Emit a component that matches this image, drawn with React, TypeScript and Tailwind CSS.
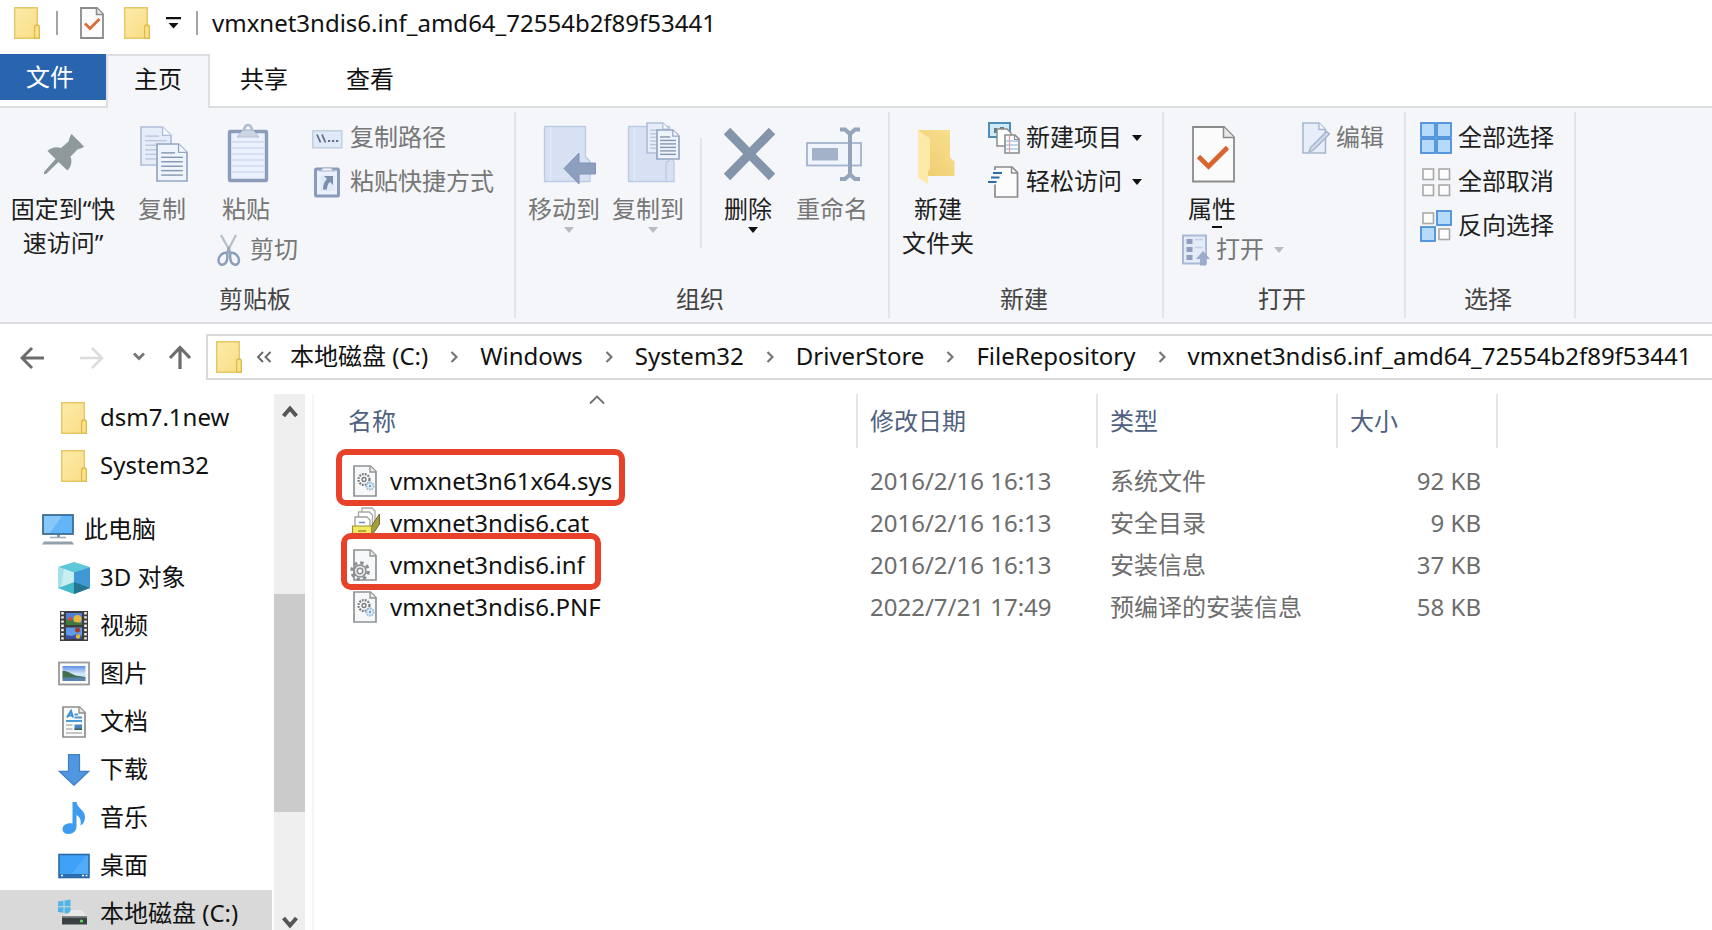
import type { ReactNode } from 'react';

const FolderIcon = () => (
  <svg className="h-8 w-[26px] shrink-0" viewBox="0 0 26 32" aria-hidden="true">
    <defs>
      <linearGradient id="folderFill" x1="0" y1="0" x2="1" y2="1">
        <stop offset="0" stopColor="#fdebab" />
        <stop offset="1" stopColor="#f8dd83" />
      </linearGradient>
    </defs>
    <path d="M.7.7h22.6v17.2l2 1.6v11.8H.7z" fill="url(#folderFill)" stroke="#e6c766" strokeWidth="1.4" />
    <path d="M20.6 31V20.2c0-1.4.8-2.2 2.4-2.2s2.3.8 2.3 2.2v11.1z" fill="#fbe28c" stroke="#dfba4c" strokeWidth="1.3" />
  </svg>
);

const CheckDocIcon = () => (
  <svg className="h-8 w-6 shrink-0" viewBox="0 0 24 32" aria-hidden="true">
    <path d="M1 1h16l6 6v24H1z" fill="#fbfbfb" stroke="#8b8b8b" strokeWidth="1.8" />
    <path d="M16.5 1v6.500H23" fill="#e8e8e8" stroke="#8b8b8b" strokeWidth="1.5" />
    <path d="M5 16.500l5 5L19.500 12" fill="none" stroke="#dd6a39" strokeWidth="2.800" />
  </svg>
);

const Big = ({ children }: { children: ReactNode }) => (
  <svg className="size-16 shrink-0" viewBox="0 0 64 64" fill="none" aria-hidden="true">
    {children}
  </svg>
);

const PinIcon = () => (
  <Big>
    <path
      d="M40.500 12L53 24.500c-2.500 2.500-5 2-6.500 3L39.500 34.500c1.800 4.500 1 10-3 14l-9-8.500L15 52h-2v-2l11.500-13-8-8c4-4 9.500-4.500 13.500-3l7.500-6.500c1-2 .5-4.500 3-7.500z"
      fill="#8f999c"
    />
  </Big>
);

const Page = ({ x, y, w, h, light }: { x: number; y: number; w: number; h: number; light?: boolean }) => {
  const f = w * 0.28;
  const stroke = light ? '#afbed9' : '#94a6c4';
  const lines = [0.24, 0.36, 0.48, 0.6, 0.72, 0.84];
  return (
    <g>
      <path d={`M${x} ${y}h${w - f}l${f} ${f}v${h - f}h${-w}z`} fill={light ? '#e6edf9' : '#eef3fc'} stroke={stroke} strokeWidth="1.7" />
      <path d={`M${x + w - f} ${y}v${f}h${f}`} fill="#f8faff" stroke={stroke} strokeWidth="1.3" />
      {lines.map((l, i) => (
        <path
          key={l}
          d={`M${x + w * 0.14} ${y + h * l}H${x + w * (i < 1 ? 0.6 : 0.86)}`}
          stroke={light ? '#b9c7df' : '#8495b2'}
          strokeWidth="1.400"
        />
      ))}
    </g>
  );
};

const CopyIcon = () => (
  <Big>
    <Page x={11} y={5} w={30} h={38} light />
    <Page x={27} y={22} w={30} h={37} />
  </Big>
);

const PasteIcon = () => (
  <Big>
    <rect x="15.500" y="9.500" width="37" height="49" rx="1" fill="#eaf1fd" stroke="#8b9cba" strokeWidth="3.400" />
    <path d="M18 20h32M18 26h32M18 32h32M18 38h32M18 44h32M18 50h32" stroke="#cfdaec" strokeWidth="1.400" />
    <path d="M23 15l6-7h10l6 7z" fill="#ccd5e2" stroke="#b3bfd0" strokeWidth="1" />
    <path d="M30 9c0-8 8-8 8 0" stroke="#b0bccd" strokeWidth="2.600" />
  </Big>
);

const MoveToIcon = () => (
  <Big>
    <path d="M12.500 4.500h41v30l4.500 5v20H12.500z" fill="#d7e1f3" stroke="#bccbe5" strokeWidth="1.300" />
    <path d="M18.500 5v54" stroke="#e3ebf8" strokeWidth="1.500" />
    <path d="M32 46.500L47 31v10h16.500v11H47v10z" fill="#8d9fbe" stroke="#8094b5" />
  </Big>
);

const CopyToIcon = () => (
  <Big>
    <path d="M12.500 4.500h41v30l4.500 5v20H12.500z" fill="#d7e1f3" stroke="#bccbe5" strokeWidth="1.300" />
    <path d="M18.500 5v54" stroke="#e3ebf8" strokeWidth="1.500" />
    <path d="M50 59V42c0-2 1.500-3 4-3" stroke="#bccbe5" strokeWidth="1.300" />
    <Page x={31} y={1} w={22} h={30} light />
    <Page x={41} y={8} w={22} h={29} />
  </Big>
);

const DeleteIcon = () => (
  <Big>
    <path d="M11 9l45 46M56 9L11 55" stroke="#8495ab" strokeWidth="9" />
  </Big>
);

const RenameIcon = () => (
  <Big>
    <rect x="7" y="21" width="54" height="22.500" fill="#eff4fd" stroke="#a3b3cd" strokeWidth="1.800" />
    <rect x="12" y="26" width="26" height="12.500" fill="#a3b2c8" />
    <path d="M50 12v40" stroke="#93a4bb" strokeWidth="4" />
    <path d="M40 7.500h5l5 4.500 5-4.500h5M40 57h5l5-4.500 5 4.500h5" stroke="#93a4bb" strokeWidth="4" />
  </Big>
);

const NewFolderIcon = () => (
  <Big>
    <defs>
      <linearGradient id="backPanel" x1="0" y1="1" x2="1" y2="0">
        <stop offset="0" stopColor="#efcb6c" />
        <stop offset="1" stopColor="#f8e091" />
      </linearGradient>
    </defs>
    <path d="M12 8h32v27.500l4.500 4V54H20z" fill="url(#backPanel)" />
    <path d="M12 8l10.500 7.500c1 1 1.500 2 1.500 3.500v29l-2 1.500V62l-10-6z" fill="#fde9a8" />
  </Big>
);

const PropertiesIcon = () => (
  <Big>
    <path d="M13 5h31l10 10v44.500H13z" fill="#fbfbfb" stroke="#8b8b8b" strokeWidth="1.800" />
    <path d="M43.500 5v10.500H54" fill="#e9e9e9" stroke="#8b8b8b" strokeWidth="1.500" />
    <path d="M18.500 34.500L28.500 44.500L47.500 25.500" stroke="#da642f" strokeWidth="4.600" />
  </Big>
);

const Small = ({ children }: { children: ReactNode }) => (
  <svg className="size-8 shrink-0" viewBox="0 0 32 32" fill="none" aria-hidden="true">
    {children}
  </svg>
);

const PathIcon = () => (
  <Small>
    <rect x=".8" y="8.800" width="29" height="17" fill="#e0e9f7" stroke="#c2cee1" strokeWidth="1.500" />
    <path d="M5 12.500l3.500 8M10 12.500l3.500 8" stroke="#5f6f87" strokeWidth="1.800" />
    <path d="M16 19h2.200M20 19h2.200M24 19h2.200" stroke="#5f6f87" strokeWidth="2" />
  </Small>
);

const PasteShortcutIcon = () => (
  <Small>
    <rect x="3.500" y="3" width="23" height="27" rx="1" fill="#eaf1fd" stroke="#8b9cba" strokeWidth="3" />
    <path d="M8 5l3-3h8l3 3z" fill="#f2f5fa" stroke="#a7b5ca" strokeWidth="1.200" />
    <rect x="8.500" y="9.500" width="14" height="15.500" fill="#e0e9f6" />
    <path d="M12 10h9v9l-3-3c-2 1.500-3 4-3 7.500h-4c0-5 1.500-8 4-10.500z" fill="#7b8eac" />
  </Small>
);

const ScissorsIcon = () => (
  <svg className="h-8 w-7 shrink-0" viewBox="0 0 28 32" fill="none" aria-hidden="true">
    <path d="M5 1l9.500 17M20 1l-9 17" stroke="#b5c0cd" strokeWidth="2.300" />
    <path
      d="M11 19c-4-1-8.500 3-8.500 7.500 0 3.500 2.500 4.500 4.500 4 3.500-1 5-5 4-11.500zM14.500 19c4-1 8.500 3 8.500 7.500 0 3.500-2.500 4.500-4.500 4-3.500-1-5-5-4-11.500z"
      stroke="#8c9fba"
      strokeWidth="2.500"
    />
    <path d="M12.700 13v7" stroke="#98a8bf" strokeWidth="3" />
  </svg>
);

const NewItemIcon = () => (
  <Small>
    <rect x="1" y="1" width="21" height="14" fill="#cfeaf8" stroke="#4e8fb8" strokeWidth="2" />
    <path d="M6 11V6h3v3h3V5h4v6z" fill="#5f7f80" />
    <path d="M9 7h10l4 4v13H9z" fill="#fff" stroke="#8c8c8c" strokeWidth="1.500" />
    <path d="M17 13h10l4 4v14H17z" fill="#fbfdff" stroke="#8c8c8c" strokeWidth="1.600" />
    <path d="M26.500 13v4.500H31" stroke="#8c8c8c" strokeWidth="1.200" />
    <path d="M18 19h12M18 23h12M18 27h12" stroke="#a9cbe8" strokeWidth="1.300" />
    <path d="M21.500 14v16" stroke="#e2a3ac" strokeWidth="1.300" />
  </Small>
);

const EasyAccessIcon = () => (
  <Small>
    <path d="M7 1h17l5.500 5.500V31H7z" fill="#fcfcfc" stroke="#8b8b8b" strokeWidth="1.700" />
    <path d="M23.500 1v6h6" stroke="#8b8b8b" strokeWidth="1.400" />
    <path d="M4 6.500h10M2 11.500h10M0 16h9" stroke="#f5f7fa" strokeWidth="5" />
    <path d="M5 7h9M3 11.500h8.500M0 16h8.500" stroke="#2f6ca5" strokeWidth="2.200" />
  </Small>
);

const OpenIcon = () => (
  <svg className="h-8 w-7 shrink-0" viewBox="0 0 28 32" fill="none" aria-hidden="true">
    <rect x="1" y="1.500" width="23" height="28" fill="#e3eaf8" stroke="#aab9d6" strokeWidth="2" />
    <path d="M4.500 5h6v5h-6zM4.500 13h6v5h-6zM4.500 21h6v5h-6z" fill="#8f9fbd" />
    <path d="M13 5.500h8M13 13.500h8" stroke="#c5d0e4" strokeWidth="1.500" />
    <path d="M21 17l7 8h-4v6.500h-6V25h-4z" fill="#9babc9" />
  </svg>
);

const EditIcon = () => (
  <svg className="h-8 w-7 shrink-0" viewBox="0 0 28 32" fill="none" aria-hidden="true">
    <path d="M1 1h16l6.500 6.500V31H1z" fill="#e7eefa" stroke="#a9b7cf" strokeWidth="1.600" />
    <path d="M17 1v6.500h6" fill="#f7faff" stroke="#a9b7cf" strokeWidth="1.400" />
    <path d="M24.500 9.500l3 2.500-16 16-4.500 2 1.500-4.500z" fill="#cdd8ea" stroke="#a3b2cb" strokeWidth="1.300" />
  </svg>
);

const BlueCell = ({ x, y }: { x: number; y: number }) => (
  <rect x={x + 1} y={y + 1} width="14" height="14" fill="#b5dafc" stroke="#4a90d9" strokeWidth="1.800" />
);
const GrayCell = ({ x, y }: { x: number; y: number }) => (
  <rect x={x + 3} y={y + 3} width="10.500" height="10.500" fill="#fdfdfd" stroke="#a9a9a9" strokeWidth="1.600" />
);

const SelectAllIcon = () => (
  <Small>
    <BlueCell x={0} y={0} />
    <BlueCell x={16} y={0} />
    <BlueCell x={0} y={16} />
    <BlueCell x={16} y={16} />
  </Small>
);
const SelectNoneIcon = () => (
  <Small>
    <GrayCell x={0} y={0} />
    <GrayCell x={16} y={0} />
    <GrayCell x={0} y={16} />
    <GrayCell x={16} y={16} />
  </Small>
);
const InvertIcon = () => (
  <Small>
    <GrayCell x={0} y={0} />
    <GrayCell x={16} y={16} />
    <BlueCell x={16} y={0} />
    <BlueCell x={0} y={16} />
  </Small>
);

const Caret = ({ dim }: { dim?: boolean }) => (
  <svg className="h-2 w-[10px] shrink-0" viewBox="0 0 10 8" aria-hidden="true">
    <path d="M0 1h10L5 7z" fill={dim ? '#b9bbbe' : '#111'} />
  </svg>
);

const Group = ({
  label,
  className,
  inset,
  children,
}: {
  label: string;
  className: string;
  inset: string;
  children: ReactNode;
}) => (
  <section aria-label={label} className={`flex shrink-0 flex-col border-r-2 border-[#e2e4e7] ${className}`}>
    <div className={`flex h-[171px] items-start pt-[10px] ${inset}`}>{children}</div>
    <div className="pr-1 text-center leading-8 text-[#444]">{label}</div>
  </section>
);

const BigButton = ({
  icon,
  label,
  className,
  disabled,
  caret,
}: {
  icon: ReactNode;
  label: ReactNode;
  className: string;
  disabled?: boolean;
  caret?: boolean;
}) => (
  <button
    type="button"
    disabled={disabled}
    className={`flex shrink-0 flex-col items-center leading-[34px] whitespace-nowrap text-[#1e1e1e] disabled:text-[#777] ${className}`}
  >
    {icon}
    <span className="mt-[6px]">{label}</span>
    {caret && (
      <span className="flex pl-[10px]">
        <Caret dim={disabled} />
      </span>
    )}
  </button>
);

const SmallButton = ({
  icon,
  label,
  disabled,
  caret,
}: {
  icon: ReactNode;
  label: string;
  disabled?: boolean;
  caret?: boolean;
}) => (
  <button
    type="button"
    disabled={disabled}
    className="flex h-8 items-center gap-[6px] leading-[30px] whitespace-nowrap text-[#1e1e1e] disabled:text-[#777]"
  >
    {icon}
    <span className="pb-[2px]">{label}</span>
    {caret && (
      <span className="flex pl-1">
        <Caret dim={disabled} />
      </span>
    )}
  </button>
);

const PcIcon = () => (
  <Small>
    <rect x="1" y="1" width="30" height="19" fill="#62b5f6" stroke="#3c6f97" strokeWidth="1.800" />
    <path d="M2 2h18L8 19H2z" fill="#86c8fa" />
    <path d="M15 21h3v2h-3z" fill="#8795a3" />
    <path d="M8 23.500h16" stroke="#a3afba" strokeWidth="1.600" />
    <path d="M2 27.500h28l2 3H0z" fill="#92a1ae" />
  </Small>
);

const CubeIcon = () => (
  <Small>
    <path d="M0 5l16-5 16 5-16 6z" fill="#5fc8d8" />
    <path d="M0 5l16 5.500V32L0 26z" fill="#a5e1ea" />
    <path d="M32 5l-16 5.500V32l16-6z" fill="#3f97d3" />
    <path d="M0 26l16-6v12z" fill="#45b9cb" />
    <path d="M16 20l16 6-16 6z" fill="#24758f" />
    <path d="M6 7l10 3.500V20L3 25z" fill="#d6f4f7" opacity=".7" />
  </Small>
);

const VideoIcon = () => (
  <Small>
    <rect x="2" y="1" width="28" height="30" fill="#3d3d3d" />
    <path d="M4.500 2v28M27.500 2v28" stroke="#f1f1f1" strokeWidth="2.600" strokeDasharray="2.400 1.800" />
    <rect x="8" y="3" width="16" height="12" fill="#4f7fd6" />
    <rect x="8" y="17.500" width="16" height="11.500" fill="#5f9be8" />
    <circle cx="19.500" cy="9" r="4" fill="#e5b934" />
    <path d="M8 10l5-2 3 4 8 1v2H8z" fill="#3d7a3c" />
    <circle cx="12" cy="9" r="2" fill="#cf4b3a" />
    <circle cx="19.500" cy="20" r="2.500" fill="#a23a2c" />
    <path d="M8 25l6 1 5-2 5 2v3H8z" fill="#3a4fa5" />
    <circle cx="20" cy="26.500" r="2.300" fill="#e5b934" />
  </Small>
);

const PictureIcon = () => (
  <Small>
    <defs>
      <linearGradient id="sky" x1="0" y1="0" x2="0" y2="1">
        <stop offset="0" stopColor="#5f8fe4" />
        <stop offset=".5" stopColor="#cfe6fa" />
        <stop offset="1" stopColor="#cfe6fa" />
      </linearGradient>
    </defs>
    <rect x="1" y="4.500" width="30" height="22" fill="#fdfdfd" stroke="#9a9a9a" strokeWidth="1.800" />
    <rect x="4.500" y="8" width="23" height="15" fill="url(#sky)" />
    <path d="M4.500 13c5-.5 8 2.500 13 4.500l10 1.500v1h-23z" fill="#42704f" />
    <path d="M4.500 19.500h23V23h-23z" fill="#5985ae" />
  </Small>
);

const DocIcon = () => (
  <Small>
    <path d="M5 1h16.500L27 6.500V31H5z" fill="#fbfbfb" stroke="#8d8d8d" strokeWidth="1.700" />
    <path d="M21 1v6h6" fill="#e8e8e8" stroke="#8d8d8d" strokeWidth="1.300" />
    <path d="M9 11.500L13 5l2 6.500M10.500 9.500H14" stroke="#3d8fd0" strokeWidth="2" />
    <path d="M16.500 8.500H20M16.500 11.500H24M8 15h16" stroke="#4b9ad8" strokeWidth="1.800" />
    <path d="M8 19h6.500M8 23h6.500M8 27h16" stroke="#b5b5b5" strokeWidth="1.500" />
    <rect x="16.500" y="18.500" width="7.500" height="5.500" fill="#4d86bd" />
    <path d="M16.500 22.500h7.500V24h-7.500z" fill="#335f4c" />
  </Small>
);

const DownloadIcon = () => (
  <Small>
    <path d="M10.500.7h11v16.600h9.300L16 31.300 1.200 17.300h9.300z" fill="#4f97e0" stroke="#3f7fc4" strokeWidth="1.200" />
  </Small>
);

const MusicIcon = () => (
  <Small>
    <path
      d="M14.500 0h4c.5 6 8.500 8 8.500 15 0 4-2 7.500-4.500 8.500 1-6-1-9-4-10.500v11.500c0 4.500-3.500 7.500-8 7.500-3.500 0-6-2-6-5 0-4 4.500-6.500 10-5.500z"
      fill="#3d9cf0"
    />
  </Small>
);

const DesktopIcon = () => (
  <Small>
    <rect x="1" y="4.500" width="30" height="23" fill="#3ea0f7" stroke="#2c6ba8" strokeWidth="1.600" />
    <path d="M28 6L14 23.500h16V6z" fill="#5bb0fa" opacity=".7" />
    <path d="M1.500 24h29v3h-29z" fill="#2a6db0" />
    <path d="M3 25.500h2M24 25.500h2M27.500 25.500h2" stroke="#fff" strokeWidth="1.500" />
  </Small>
);

const DiskIcon = () => (
  <Small>
    <path d="M0 3.500l5.500-.8v5.500H0zM6.500 2.500l6-1v6.700h-6zM0 9.300h5.500v5.400l-5.500-.8zM6.500 9.300h6V16l-6-1z" fill="#4fb5e6" />
    <path d="M14 12h10l5 6.500H4l5-2z" fill="#e9e9e9" />
    <path d="M4 18.500h25v8H4z" fill="#3d4043" />
    <path d="M4 18.500h25V20H4z" fill="#70757a" />
    <circle cx="23.500" cy="23" r="1.600" fill="#5fe35b" />
  </Small>
);

const FileShape = () => (
  <>
    <path d="M3 1h16.500L25 6.500V31H3z" fill="#f7f8f9" stroke="#8f9294" strokeWidth="1.700" />
    <path d="M19 1v6h6" fill="#e8e8e8" stroke="#8f9294" strokeWidth="1.300" />
  </>
);

const SysIcon = () => (
  <svg className="h-8 w-7 shrink-0" viewBox="0 0 28 32" fill="none" aria-hidden="true">
    <FileShape />
    <circle cx="13" cy="14.500" r="5.500" stroke="#75797c" strokeWidth="2.200" strokeDasharray="1.800 1.100" />
    <circle cx="13" cy="14.500" r="2" stroke="#75797c" strokeWidth="1.300" />
    <circle cx="19" cy="21" r="3.600" fill="#e5f1fa" stroke="#9cbcd6" strokeWidth="2" strokeDasharray="1.600 .8" />
    <circle cx="19" cy="21" r="1.200" fill="#6e9dc4" />
  </svg>
);

const CatIcon = () => (
  <svg className="h-8 w-7 shrink-0 overflow-visible" viewBox="0 0 28 32" fill="none" aria-hidden="true">
    <path d="M11 1h10l3 3v12H11z" fill="#fff" stroke="#a8a8a8" strokeWidth="1.300" />
    <path d="M7.500 5h11l3 3v12h-14z" fill="#fff" stroke="#a8a8a8" strokeWidth="1.300" />
    <path d="M4 10h12l3 3v10H4z" fill="#fff" stroke="#a0a0a0" strokeWidth="1.300" />
    <path d="M8 15.500h6" stroke="#6b8fc0" strokeWidth="1.500" />
    <path d="M20.500 19L28.500 7v10l-8 12z" fill="#a59c3c" stroke="#6f6a2c" />
    <path d="M1.500 19h19v10h-19z" fill="#f3ea62" stroke="#9a9136" strokeWidth="1.200" />
    <path d="M7 24h8" stroke="#b5a93a" strokeWidth="2" />
  </svg>
);

const InfIcon = () => (
  <svg className="h-8 w-7 shrink-0 overflow-visible" viewBox="0 0 28 32" fill="none" aria-hidden="true">
    <FileShape />
    <circle cx="9" cy="22" r="8.300" stroke="#8a8e90" strokeWidth="3" strokeDasharray="3.400 3.120" />
    <circle cx="9" cy="22" r="6" fill="#e6e8e9" stroke="#8a8e90" strokeWidth="1.600" />
    <circle cx="9" cy="22" r="2.700" fill="#fff" stroke="#8a8e90" strokeWidth="1.500" />
  </svg>
);

const Crumb = ({ children }: { children: ReactNode }) => (
  <li className="flex shrink-0 items-center">
    <a href="#" className="pb-[2px] text-[#111]">
      {children}
    </a>
  </li>
);

const CrumbArrow = () => (
  <li aria-hidden="true" className="flex w-[52px] shrink-0 items-center justify-center">
    <svg className="h-4 w-2" viewBox="0 0 8 16" fill="none">
      <path d="M1.500 3l5 5-5 5" stroke="#777" strokeWidth="2.200" />
    </svg>
  </li>
);

const crumbs = ['Windows', 'System32', 'DriverStore', 'FileRepository', 'vmxnet3ndis6.inf_amd64_72554b2f89f53441'];

const places: { label: string; icon: ReactNode; className: string }[] = [
  { label: 'dsm7.1new', icon: <FolderIcon />, className: 'pl-[58px]' },
  { label: 'System32', icon: <FolderIcon />, className: 'pl-[58px]' },
  { label: '此电脑', icon: <PcIcon />, className: 'mt-4 pl-[42px]' },
  { label: '3D 对象', icon: <CubeIcon />, className: 'pl-[58px]' },
  { label: '视频', icon: <VideoIcon />, className: 'pl-[58px]' },
  { label: '图片', icon: <PictureIcon />, className: 'pl-[58px]' },
  { label: '文档', icon: <DocIcon />, className: 'pl-[58px]' },
  { label: '下载', icon: <DownloadIcon />, className: 'pl-[58px]' },
  { label: '音乐', icon: <MusicIcon />, className: 'pl-[58px]' },
  { label: '桌面', icon: <DesktopIcon />, className: 'pl-[58px]' },
  { label: '本地磁盘 (C:)', icon: <DiskIcon />, className: 'bg-[#d9d9d9] pl-[58px]' },
];

const files: { name: string; icon: ReactNode; date: string; type: string; size: string; mark?: string }[] = [
  {
    name: 'vmxnet3n61x64.sys',
    icon: <SysIcon />,
    date: '2016/2/16 16:13',
    type: '系统文件',
    size: '92 KB',
    mark: 'left-[22px] w-[289px]',
  },
  { name: 'vmxnet3ndis6.cat', icon: <CatIcon />, date: '2016/2/16 16:13', type: '安全目录', size: '9 KB' },
  {
    name: 'vmxnet3ndis6.inf',
    icon: <InfIcon />,
    date: '2016/2/16 16:13',
    type: '安装信息',
    size: '37 KB',
    mark: 'left-[27px] w-[260px]',
  },
  { name: 'vmxnet3ndis6.PNF', icon: <SysIcon />, date: '2022/7/21 17:49', type: '预编译的安装信息', size: '58 KB' },
];

export default function App() {
  return (
    <div
      lang="zh-CN"
      className="flex h-screen flex-col overflow-hidden bg-white font-['Noto_Sans','Noto_Sans_CJK_SC',sans-serif] text-[24px] text-[#111]"
    >
      <header className="flex h-[54px] shrink-0 items-center pb-2 pl-[14px]">
        <FolderIcon />
        <span className="ml-4 h-6 w-[2px] bg-[#a5a5a5]" />
        <button type="button" aria-label="属性" className="ml-[22px]">
          <CheckDocIcon />
        </button>
        <button type="button" aria-label="新建文件夹" className="ml-5">
          <FolderIcon />
        </button>
        <button type="button" aria-label="自定义快速访问工具栏" className="ml-4">
          <svg className="h-4 w-4" viewBox="0 0 16 16" aria-hidden="true">
            <path d="M0 2h15v2.200H0zM2.500 8h10L7.500 13.500z" fill="#111" />
          </svg>
        </button>
        <span className="ml-[14px] h-6 w-[2px] bg-[#a5a5a5]" />
        <h1 className="ml-[14px] leading-8 whitespace-nowrap">vmxnet3ndis6.inf_amd64_72554b2f89f53441</h1>
      </header>

      <nav aria-label="功能区" className="flex h-[54px] shrink-0 border-b-2 border-[#dcdee1] leading-[46px]">
        <button type="button" className="h-[46px] w-[106px] bg-[#2865ae] pr-[6px] text-center text-white">
          文件
        </button>
        <button type="button" className="-mb-[2px] h-[54px] w-[104px] border-2 border-b-0 border-[#dcdee1] bg-[#f4f6f9] pb-2">
          主页
        </button>
        <button type="button" className="h-12 w-[108px] pt-[2px]">
          共享
        </button>
        <button type="button" className="h-12 w-[104px] pt-[2px]">
          查看
        </button>
      </nav>

      <div className="flex h-[216px] shrink-0 border-b-2 border-[#dcdee1] bg-[#f4f6f9] py-1">
        <Group label="剪贴板" className="w-[516px]" inset="pl-1">
          <BigButton
            className="w-[118px]"
            icon={<PinIcon />}
            label={
              <>
                固定到“快
                <br />
                速访问”
              </>
            }
          />
          <BigButton className="w-20" disabled icon={<CopyIcon />} label="复制" />
          <div className="ml-[2px] flex w-[108px] flex-col items-start gap-2">
            <BigButton className="w-[84px]" disabled icon={<PasteIcon />} label="粘贴" />
            <div className="pl-3">
              <SmallButton disabled icon={<ScissorsIcon />} label="剪切" />
            </div>
          </div>
          <div className="flex flex-col gap-3">
            <SmallButton disabled icon={<PathIcon />} label="复制路径" />
            <SmallButton disabled icon={<PasteShortcutIcon />} label="粘贴快捷方式" />
          </div>
        </Group>

        <Group label="组织" className="w-[374px]" inset="pl-[6px]">
          <BigButton className="w-[84px]" disabled caret icon={<MoveToIcon />} label="移动到" />
          <BigButton className="w-[84px]" disabled caret icon={<CopyToIcon />} label="复制到" />
          <span className="mt-4 mr-[6px] ml-[10px] h-[110px] w-[2px] bg-[#e2e4e7]" />
          <BigButton className="w-20" caret icon={<DeleteIcon />} label="删除" />
          <BigButton className="w-[88px]" disabled icon={<RenameIcon />} label="重命名" />
        </Group>

        <Group label="新建" className="w-[274px]" inset="pl-[2px]">
          <BigButton
            className="w-[92px]"
            icon={<NewFolderIcon />}
            label={
              <>
                新建
                <br />
                文件夹
              </>
            }
          />
          <div className="ml-1 flex flex-col gap-3">
            <SmallButton caret icon={<NewItemIcon />} label="新建项目" />
            <SmallButton caret icon={<EasyAccessIcon />} label="轻松访问" />
          </div>
        </Group>

        <Group label="打开" className="w-[242px]" inset="pl-[18px]">
          <div className="flex w-[120px] flex-col items-start">
            <BigButton className="w-[60px]" icon={<PropertiesIcon />} label="属性" />
            <span className="mb-[6px] ml-[30px] h-[2px] w-[10px] bg-[#111]" />
            <SmallButton disabled caret icon={<OpenIcon />} label="打开" />
          </div>
          <SmallButton disabled icon={<EditIcon />} label="编辑" />
        </Group>

        <Group label="选择" className="w-[170px]" inset="pl-[14px]">
          <div className="flex flex-col gap-3">
            <SmallButton icon={<SelectAllIcon />} label="全部选择" />
            <SmallButton icon={<SelectNoneIcon />} label="全部取消" />
            <SmallButton icon={<InvertIcon />} label="反向选择" />
          </div>
        </Group>
      </div>

      <div className="flex h-[70px] shrink-0 items-start pt-[10px]">
        <div className="flex h-[46px] w-[206px] shrink-0 items-center pl-5">
          <button type="button" aria-label="后退">
            <svg className="size-6" viewBox="0 0 24 24" fill="none" aria-hidden="true">
              <path d="M24 13H3M12 3L2 13l10 10" stroke="#6c6c6c" strokeWidth="3" />
            </svg>
          </button>
          <button type="button" aria-label="前进" disabled className="ml-9">
            <svg className="size-6" viewBox="0 0 24 24" fill="none" aria-hidden="true">
              <path d="M0 13h21M12 3l10 10-10 10" stroke="#dcdcdc" strokeWidth="2.600" />
            </svg>
          </button>
          <button type="button" aria-label="最近浏览的位置" className="ml-[29px]">
            <svg className="h-4 w-3" viewBox="0 0 12 16" fill="none" aria-hidden="true">
              <path d="M1 4.500l5 5 5-5" stroke="#767676" strokeWidth="2.800" />
            </svg>
          </button>
          <button type="button" aria-label="上移" className="ml-[23px]">
            <svg className="size-6" viewBox="0 0 24 24" fill="none" aria-hidden="true">
              <path d="M12 25V3M2 13L12 2.500 22 13" stroke="#6c6c6c" strokeWidth="3.200" />
            </svg>
          </button>
        </div>
        <div className="flex h-[46px] min-w-0 grow items-center overflow-hidden border-2 border-r-0 border-[#dadada] pl-2">
          <FolderIcon />
          <svg className="ml-[14px] h-4 w-4 shrink-0" viewBox="0 0 16 16" fill="none" aria-hidden="true">
            <path d="M7 3L2 8l5 5M14.500 3l-5 5 5 5" stroke="#666" strokeWidth="1.900" />
          </svg>
          <ol className="ml-[18px] flex items-center leading-8 whitespace-nowrap">
            <Crumb>本地磁盘 (C:)</Crumb>
            {crumbs.map((c) => [<CrumbArrow key={`${c}-arrow`} />, <Crumb key={c}>{c}</Crumb>])}
          </ol>
        </div>
      </div>

      <div className="flex min-h-0 grow">
        <aside className="flex w-[306px] shrink-0">
          <ul className="w-[272px] overflow-hidden">
            {places.map((p) => (
              <li key={p.label} className={`h-12 ${p.className}`}>
                <a href="#" className="flex h-12 items-center gap-[10px] whitespace-nowrap">
                  <span className="flex w-8 shrink-0 justify-center">{p.icon}</span>
                  <span className="pb-[2px]">{p.label}</span>
                </a>
              </li>
            ))}
          </ul>
          <div className="ml-[2px] flex w-[31px] flex-col items-center justify-between bg-[#efefef]">
            <svg className="mt-2 h-5 w-4" viewBox="0 0 16 20" fill="none" aria-hidden="true">
              <path d="M1.500 14L8 6.500l6.500 7.500" stroke="#555" strokeWidth="4" />
            </svg>
            <div className="mt-[70px] h-[218px] w-full bg-[#cbcbcb]" />
            <svg className="h-4 w-4" viewBox="0 0 16 16" fill="none" aria-hidden="true">
              <path d="M1.500 4L8 11.500 14.500 4" stroke="#555" strokeWidth="4" />
            </svg>
          </div>
        </aside>

        <main className="ml-[6px] grow overflow-hidden border-l-2 border-[#f6f6f6]">
          <table className="w-[1184px] table-fixed border-separate border-spacing-0 text-left">
            <colgroup>
              <col className="w-[544px]" />
              <col className="w-60" />
              <col className="w-60" />
              <col className="w-40" />
            </colgroup>
            <thead className="text-[#4f617f]">
              <tr className="h-[54px]">
                <th scope="col" className="relative border-r-2 border-[#e6e6e6] p-0 pl-[34px] font-normal">
                  名称
                  <svg className="absolute top-0 left-[275px] h-3 w-4" viewBox="0 0 16 12" fill="none" aria-hidden="true">
                    <path d="M1 9.500L8 2.500l7 7" stroke="#707070" strokeWidth="1.800" />
                  </svg>
                </th>
                <th scope="col" className="border-r-2 border-[#e6e6e6] p-0 pl-3 font-normal">
                  修改日期
                </th>
                <th scope="col" className="border-r-2 border-[#e6e6e6] p-0 pl-3 font-normal">
                  类型
                </th>
                <th scope="col" className="border-r-2 border-[#e6e6e6] p-0 pl-3 font-normal">
                  大小
                </th>
              </tr>
            </thead>
            <tbody className="text-[#6d6d6d]">
              <tr aria-hidden="true" className="h-3">
                <td colSpan={4} className="p-0" />
              </tr>
              {files.map((f) => (
                <tr key={f.name} className="h-[42px]">
                  <td className="relative p-0 pl-[37px]">
                    <a href="#" className="flex h-[42px] items-center gap-[11px] text-[#111]">
                      {f.icon}
                      {f.name}
                    </a>
                    {f.mark && (
                      <span
                        className={`pointer-events-none absolute -top-[11px] z-10 h-[57px] rounded-[10px] border-[6px] border-[#e8412a] ${f.mark}`}
                      />
                    )}
                  </td>
                  <td className="p-0 pl-3">{f.date}</td>
                  <td className="p-0 pl-3">{f.type}</td>
                  <td className="p-0 pr-[17px] text-right">{f.size}</td>
                </tr>
              ))}
            </tbody>
          </table>
        </main>
      </div>
    </div>
  );
}
